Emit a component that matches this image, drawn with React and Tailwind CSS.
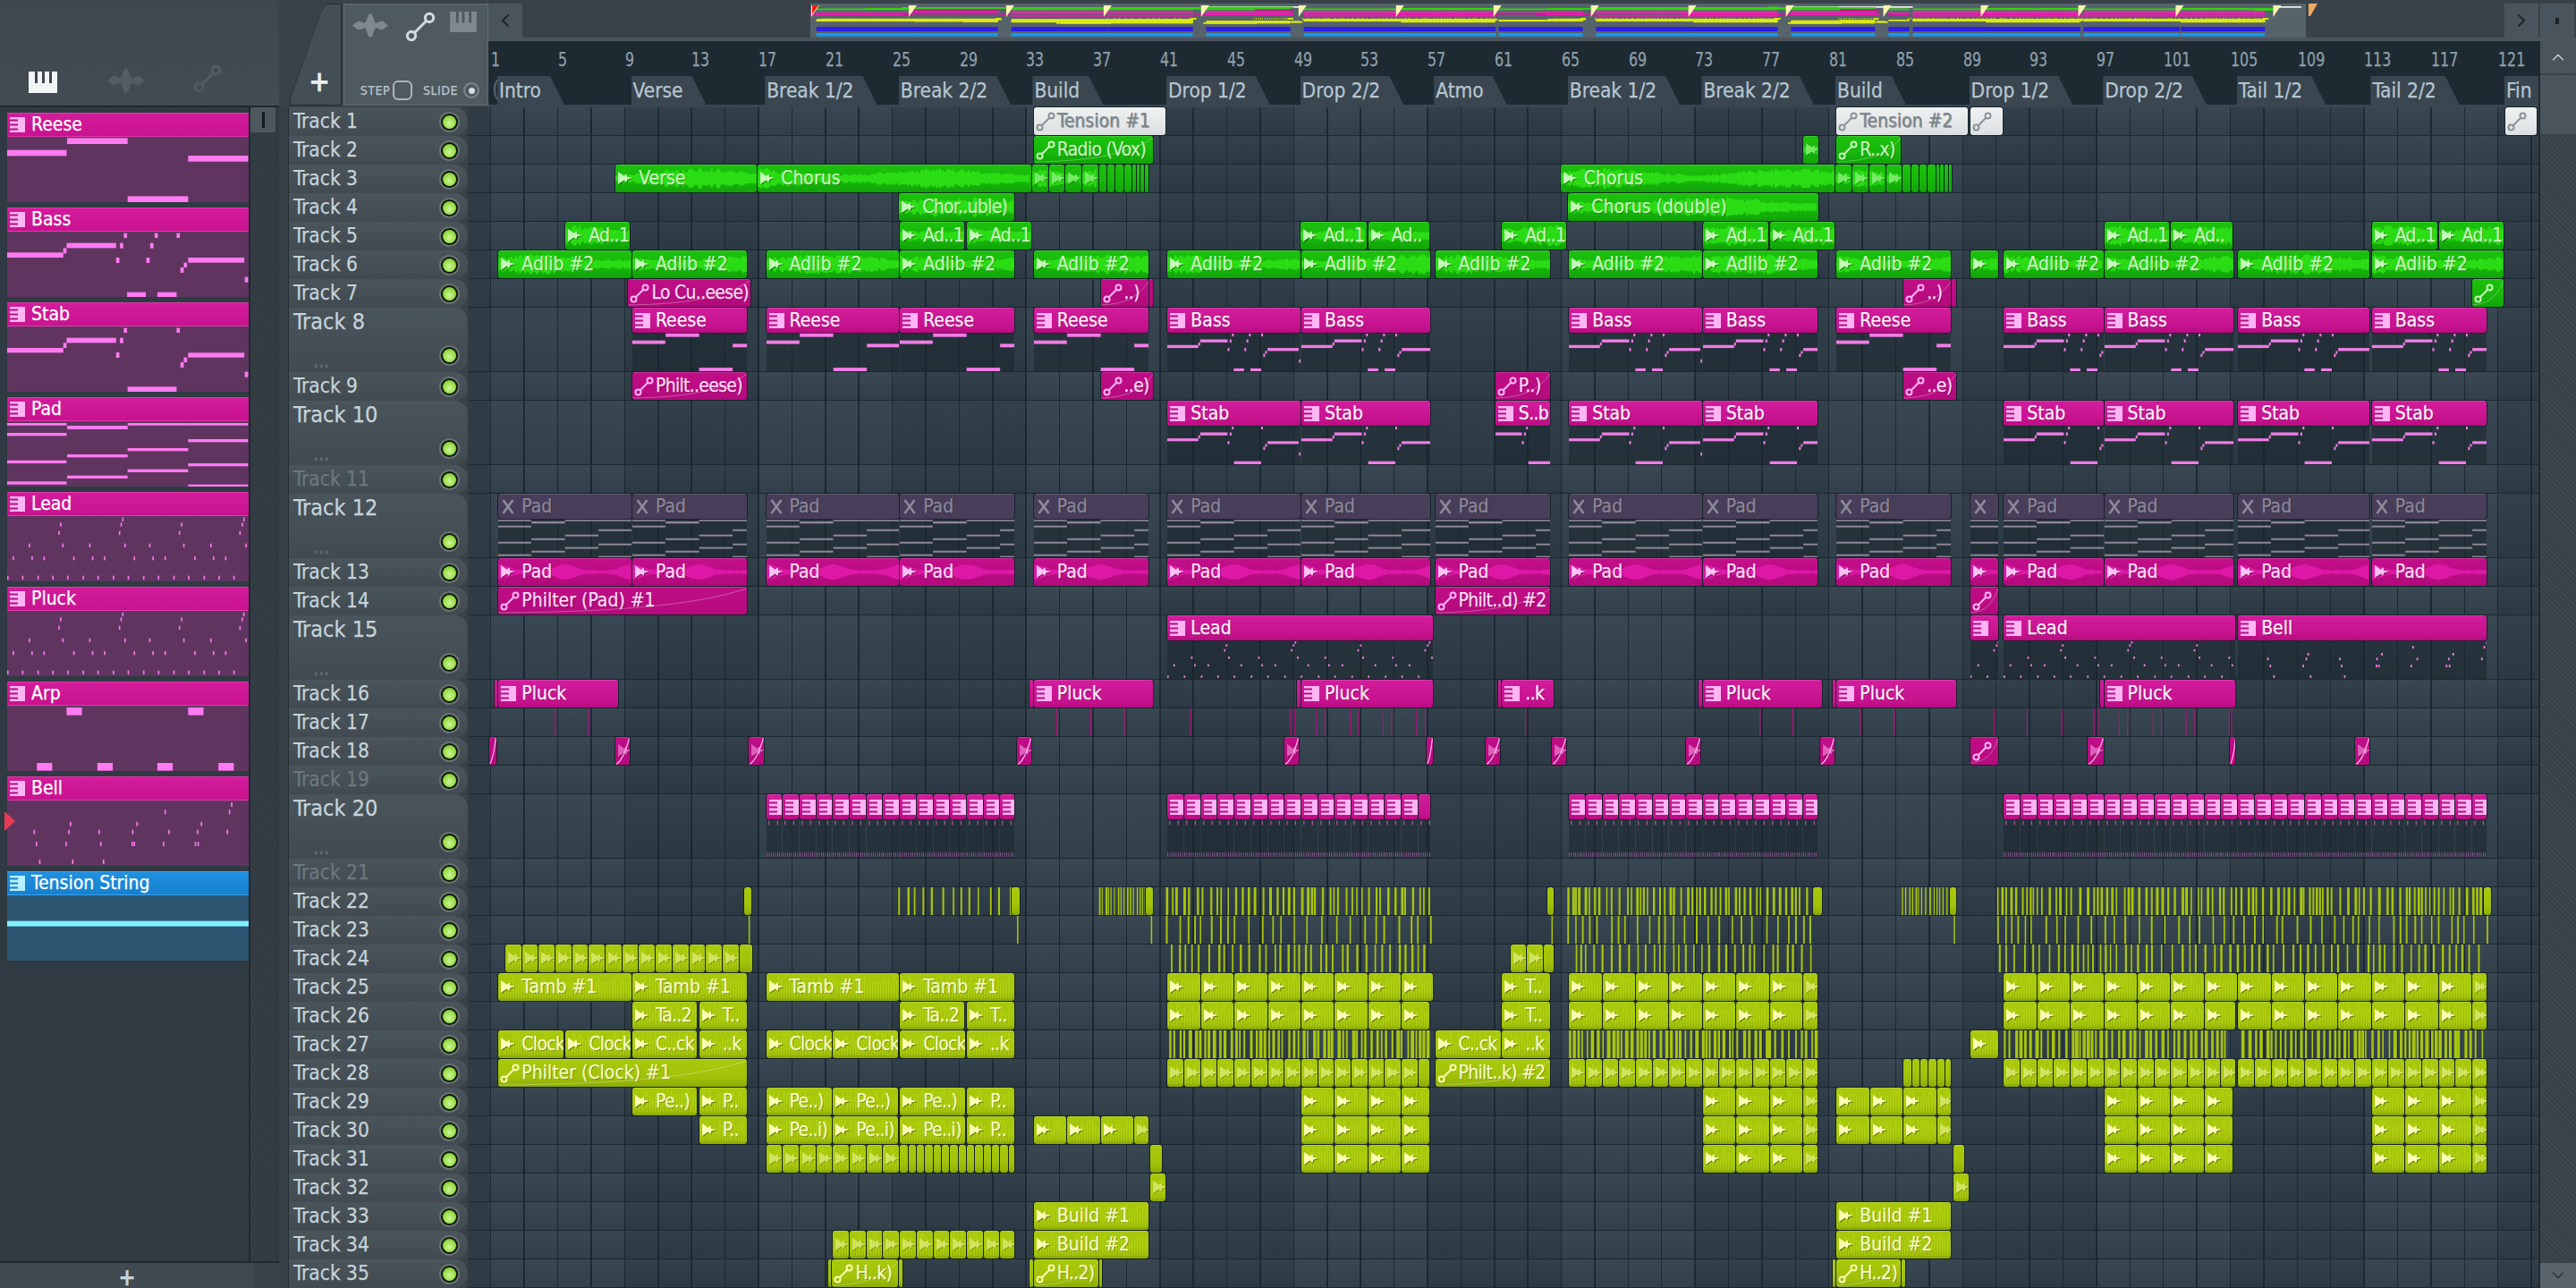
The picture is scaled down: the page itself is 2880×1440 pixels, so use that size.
import React from 'react';
import { ChevronLeft, ChevronRight, ChevronUp, ChevronDown } from 'lucide-react';

const PB = 18.7;
const bx = (b) => 2 + (b - 1) * PB;
const rnd = (s) => { const v = Math.sin(s * 12.9898 + 4.1) * 43758.5453; return v - Math.floor(v); };
const z1 = (z) => z / 1.6333 - 546;
const z2 = (z) => z / 1.6333 + 414;
const z3 = (z) => z / 1.6333 + 1374;

const pc = (s, e, pitch, col, icon = 'a') => {
  const out = [];
  let b = s;
  while (b < e - 0.02) {
    const n = Math.min(b + pitch, e);
    const w = n - b;
    out.push({ s: b, e: n, t: '', i: w >= 0.8 ? icon : '', c: col, f: w < 1.5 });
    b = n;
  }
  return out;
};
const c = (s, e, t, i, col, extra = {}) => ({ s, e, t, i, c: col, ...extra });
const tail = (s, col) => [...pc(s, s + 4, 1, col), ...pc(s + 4, s + 6, 0.5, col, ''), ...pc(s + 6, s + 7, 0.25, col, '')];
const plk = (s, e, t) => [c(s, s + 0.25, '', '', 'p'), c(s + 0.25, e, t, 'n', 'p')];
const ends = (s, e, t, col) => [c(s, s + 0.25, '', '', col), c(e - 0.25, e, '', '', col), c(s + 0.25, e - 0.25, t, 'z', col)];

const SEG = [[1.5, 9.5], [9.5, 16.4], [17.5, 25.5], [25.5, 32.4], [33.5, 40.4], [41.5, 49.5], [49.5, 57.25], [57.5, 64.4], [65.5, 73.5], [73.5, 80.4], [81.5, 88.4], [89.5, 91.2], [91.5, 97.5], [97.5, 105.25], [105.5, 113.4], [113.5, 120.4]];
const segT = (t, col, i, p) => SEG.map(([s, e]) => c(s, e, e - s < 2 ? '' : t, i, col, p ? { p } : {}));
const REESE = [[9.5, 16.4], [17.5, 25.5], [25.5, 32.4], [33.5, 40.4]];
const BASS = [[41.5, 49.5], [49.5, 57.25], [65.5, 73.5], [73.5, 80.4], [91.5, 97.5], [97.5, 105.25], [105.5, 113.4], [113.5, 120.4]];

const CLIPS = {
  1: [c(33.5, 41.4, 'Tension #1', 'z', 'w'), c(81.5, 89.4, 'Tension #2', 'z', 'w'), c(89.5, 91.5, '', 'z', 'w'), c(121.5, 123.4, '', 'z', 'w')],
  2: [c(33.5, 40.65, 'Radio (Vox)', 'z', 'g'), c(79.5, 80.45, '', 'a', 'g', { f: true }), c(81.5, 85.4, 'R..x)', 'z', 'g')],
  3: [c(8.5, 17, 'Verse', 'a', 'g'), c(17, 33.4, 'Chorus', 'a', 'g'), ...tail(33.4, 'g'), c(65, 81.45, 'Chorus', 'a', 'g'), ...tail(81.45, 'g')],
  4: [c(25.45, 32.4, 'Chor..uble)', 'a', 'g'), c(65.45, 80.45, 'Chorus (double)', 'a', 'g')],
  5: [[5.5, 9.4, 'Ad..1'], [25.5, 29.4, 'Ad..1'], [29.5, 33.4, 'Ad..1'], [49.45, 53.45, 'Ad..1'], [53.5, 57.2, 'Ad..'], [61.5, 65.4, 'Ad..1'], [73.5, 77.45, 'Ad..1'], [77.5, 81.4, 'Ad..1'], [97.5, 101.4, 'Ad..1'], [101.5, 105.2, 'Ad..'], [113.5, 117.45, 'Ad..1'], [117.5, 121.4, 'Ad..1']].map(([s, e, t]) => c(s, e, t, 'a', 'g')),
  6: [...SEG.slice(0, 15).map(([s, e]) => c(s, e, e - s < 2 ? '' : 'Adlib #2', 'a', 'g')), c(113.5, 121.4, 'Adlib #2', 'a', 'g')],
  7: [c(9.26, 16.6, 'Lo Cu..eese)', 'z', 'pa'), c(37.5, 40.4, '..)', 'z', 'pa'), c(40.4, 40.65, '', '', 'pa'), c(85.5, 88.4, '..)', 'z', 'pa'), c(88.4, 88.7, '', '', 'pa'), c(119.5, 121.4, '', 'z', 'g')],
  8: [...REESE.map(([s, e]) => c(s, e, 'Reese', 'n', 'p', { p: 'reese' })), ...BASS.slice(0, 4).map(([s, e]) => c(s, e, 'Bass', 'n', 'p', { p: 'bass' })), c(81.5, 88.4, 'Reese', 'n', 'p', { p: 'reese' }), ...BASS.slice(4).map(([s, e]) => c(s, e, 'Bass', 'n', 'p', { p: 'bass' }))],
  9: [c(9.5, 16.4, 'Philt..eese)', 'z', 'pa'), c(37.5, 40.65, '..e)', 'z', 'pa'), c(61.1, 64.4, 'P..)', 'z', 'pa'), c(85.5, 88.7, '..e)', 'z', 'pa')],
  10: [...BASS.slice(0, 2).map(([s, e]) => c(s, e, 'Stab', 'n', 'p', { p: 'stab' })), c(61.1, 64.4, 'S..b', 'n', 'p', { p: 'stab', po: 2 }), ...BASS.slice(2).map(([s, e]) => c(s, e, 'Stab', 'n', 'p', { p: 'stab' }))],
  11: [],
  12: segT('Pad', 'm', 'x', 'pad'),
  13: segT('Pad', 'pw', 'a'),
  14: [c(1.5, 16.4, 'Philter (Pad) #1', 'z', 'pa'), c(57.5, 64.4, 'Philt..d) #2', 'z', 'pa'), c(89.5, 91.2, '', 'z', 'pa')],
  15: [c(41.5, 57.4, 'Lead', 'n', 'p', { p: 'lead' }), c(89.5, 91.2, '', 'n', 'p', { p: 'lead', po: 14 }), c(91.5, 105.4, 'Lead', 'n', 'p', { p: 'lead' }), c(105.5, 120.4, 'Bell', 'n', 'p', { p: 'bell' })],
  16: [...plk(1.25, 8.7, 'Pluck'), ...plk(33.25, 40.65, 'Pluck'), ...plk(49.25, 57.4, 'Pluck'), ...plk(61.25, 64.65, '..k'), ...plk(73.25, 80.65, 'Pluck'), ...plk(81.25, 88.7, 'Pluck'), ...plk(97.25, 105.4, 'Pluck')],
  17: [],
  18: [...[[0.95, 1.4], [8.5, 9.4], [16.45, 17.4], [32.5, 33.4], [48.5, 49.4], [57, 57.4], [60.5, 61.4], [64.5, 65.4], [72.5, 73.4], [80.5, 81.4], [96.5, 97.5], [105, 105.4], [112.5, 113.4]].map(([s, e]) => c(s, e, '', e - s > 0.7 ? 'a' : '', 'pa', { f: true, sl: true })), c(89.5, 91.2, '', 'z', 'pa')],
  19: [],
  20: [...pc(17.5, 32.4, 1, 'p', 'n'), ...pc(41.5, 57.25, 1, 'p', 'n'), ...pc(65.5, 80.4, 1, 'p', 'n'), ...pc(91.5, 120.4, 1, 'p', 'n')].map((k) => ({ ...k, p: 'ticks', f: false })),
  21: [],
  22: [c(16.2, 16.65, '', '', 'y'), c(32.2, 32.7, '', '', 'y'), c(40.2, 40.65, '', '', 'y'), c(64.2, 64.65, '', '', 'y'), c(80.1, 80.65, '', '', 'y'), c(88.25, 88.7, '', '', 'y'), c(120.2, 120.7, '', '', 'y')],
  23: [],
  24: [...pc(1.9, 16.7, 1, 'y'), ...pc(62, 64.65, 1, 'y')],
  25: [c(1.5, 9.5, 'Tamb #1', 'a', 'y'), c(9.5, 16.4, 'Tamb #1', 'a', 'y'), c(17.5, 25.5, 'Tamb #1', 'a', 'y'), c(25.5, 32.4, 'Tamb #1', 'a', 'y'), ...pc(41.5, 57.4, 2, 'y'), c(61.5, 64.4, 'T..', 'a', 'y'), ...pc(65.5, 80.4, 2, 'y'), ...pc(91.5, 120.4, 2, 'y')],
  26: [c(9.5, 13.4, 'Ta..2', 'a', 'y'), c(13.5, 16.4, 'T..', 'a', 'y'), c(25.5, 29.4, 'Ta..2', 'a', 'y'), c(29.5, 32.4, 'T..', 'a', 'y'), ...pc(41.5, 57.2, 2, 'y'), c(61.5, 64.4, 'T..', 'a', 'y'), ...pc(65.5, 80.4, 2, 'y'), ...pc(91.5, 105.4, 2, 'y'), ...pc(105.5, 120.4, 2, 'y')],
  27: [c(1.5, 5.45, 'Clock', 'a', 'y'), c(5.5, 9.45, 'Clock', 'a', 'y'), c(9.5, 13.4, 'C..ck', 'a', 'y'), c(13.5, 16.4, '..k', 'a', 'y'), c(17.5, 21.45, 'Clock', 'a', 'y'), c(21.5, 25.45, 'Clock', 'a', 'y'), c(25.5, 29.45, 'Clock', 'a', 'y'), c(29.5, 32.4, '..k', 'a', 'y'), c(57.5, 61.45, 'C..ck', 'a', 'y'), c(61.5, 64.4, '..k', 'a', 'y'), c(89.5, 91.2, '', 'a', 'y')],
  28: [c(1.5, 16.4, 'Philter (Clock) #1', 'z', 'y'), ...pc(41.5, 57.2, 1, 'y'), c(57.5, 64.4, 'Philt..k) #2', 'z', 'y'), ...pc(65.5, 80.4, 1, 'y'), ...pc(85.5, 88.4, 0.5, 'y', ''), ...pc(91.5, 105.4, 1, 'y'), ...pc(105.5, 120.4, 1, 'y')],
  29: [c(9.5, 13.4, 'Pe..)', 'a', 'y'), c(13.5, 16.4, 'P..', 'a', 'y'), c(17.5, 21.45, 'Pe..)', 'a', 'y'), c(21.5, 25.45, 'Pe..)', 'a', 'y'), c(25.5, 29.45, 'Pe..)', 'a', 'y'), c(29.5, 32.4, 'P..', 'a', 'y'), ...pc(49.5, 57.2, 2, 'y'), ...pc(73.5, 80.4, 2, 'y'), ...pc(81.5, 88.4, 2, 'y'), ...pc(97.5, 105.2, 2, 'y'), ...pc(113.5, 120.4, 2, 'y')],
  30: [c(13.5, 16.4, 'P..', 'a', 'y'), c(17.5, 21.45, 'Pe..i)', 'a', 'y'), c(21.5, 25.45, 'Pe..i)', 'a', 'y'), c(25.5, 29.45, 'Pe..i)', 'a', 'y'), c(29.5, 32.4, 'P..', 'a', 'y'), ...pc(33.5, 40.4, 2, 'y'), ...pc(49.5, 57.2, 2, 'y'), ...pc(73.5, 80.4, 2, 'y'), ...pc(81.5, 88.4, 2, 'y'), ...pc(97.5, 105.2, 2, 'y'), ...pc(113.5, 120.4, 2, 'y')],
  31: [...pc(17.5, 25.5, 1, 'y'), ...pc(25.5, 32.4, 0.5, 'y', ''), c(40.45, 41.2, '', '', 'y'), ...pc(49.5, 57.2, 2, 'y'), ...pc(73.5, 80.4, 2, 'y'), c(88.5, 89.2, '', '', 'y'), ...pc(97.5, 105.2, 2, 'y'), ...pc(113.5, 120.4, 2, 'y')],
  32: [c(40.45, 41.4, '', 'a', 'y', { f: true }), c(88.5, 89.45, '', 'a', 'y', { f: true })],
  33: [c(33.5, 40.4, 'Build #1', 'a', 'y'), c(81.5, 88.4, 'Build #1', 'a', 'y')],
  34: [...pc(21.5, 32.4, 1, 'y'), c(33.5, 40.4, 'Build #2', 'a', 'y'), c(81.5, 88.4, 'Build #2', 'a', 'y')],
  35: [...ends(21.2, 25.7, 'H..k)', 'y'), ...ends(33.25, 37.65, 'H..2)', 'y'), ...ends(81.25, 85.65, 'H..2)', 'y')],
};

const genLines = (s, e, seed, pMin, pMax, wMin, wMax) => {
  const out = [];
  let x = bx(s), i = 0;
  const end = bx(e);
  while (x < end) {
    const r = rnd(seed + i * 1.7), r2 = rnd(seed + i * 3.3 + 9);
    out.push({ x, w: wMin + r * (wMax - wMin) });
    x += pMin + r2 * (pMax - pMin);
    i++;
  }
  return out;
};
const LINES = {
  17: { col: '#b0127c', items: [z1(1013), z1(1073), z2(361), z2(423), z2(484), z2(605), z2(788), z2(795), z2(835), z2(851), z2(897), z2(912), z2(957), z2(972), z2(1018), z2(1034), z2(1217), z3(77), z3(137), z3(260), z3(322), z3(505), z3(565), z3(628), z3(687), z3(694), z3(733), z3(748), z3(795), z3(810), z3(855), z3(871), z3(934), z3(938)].map((x) => ({ x, w: 1.2 })) },
  22: { col: '#a9c60b', items: [...genLines(25.4, 32.2, 1, 7, 18, 1.5, 2.5), ...genLines(37.4, 40.2, 2, 2.5, 4.5, 1, 2), ...genLines(41.4, 57.3, 3, 3, 10, 1.5, 3), ...genLines(65.4, 80.1, 4, 3, 10, 1.5, 3), ...genLines(85.4, 88.25, 5, 2.5, 5, 1, 2), ...genLines(91.1, 120.2, 6, 3, 10, 1.5, 3)] },
  23: { col: '#a9c60b', items: [...[16.45, 32.5, 40.5, 64.45, 88.5].map((b) => ({ x: bx(b), w: 1.5 })), ...genLines(41.4, 57.2, 7, 6, 17, 1.5, 2), ...genLines(65.4, 80.5, 8, 6, 17, 1.5, 2), ...genLines(91.1, 120.5, 9, 6, 17, 1.5, 2)] },
  24: { col: '#a9c60b', items: [...genLines(41.7, 57.3, 10, 5, 12, 1.5, 2.5), ...genLines(65.9, 80.2, 11, 5, 12, 1.5, 2.5), ...genLines(91.2, 120.1, 12, 5, 12, 1.5, 2.5)] },
  27: { col: '#a9c60b', items: [...genLines(41.6, 57.2, 13, 3.5, 8, 1.5, 4), ...genLines(65.5, 80.4, 14, 3.5, 8, 1.5, 4), ...genLines(91.5, 105, 15, 3.5, 8, 1.5, 4), ...genLines(105.7, 120.4, 16, 3.5, 8, 1.5, 4)] },
};

const dotRows = [[5, [223, 443]], [22, [110, 220, 330, 440]], [50, [107, 217, 326, 436]], [92, [53, 114, 163, 227, 272, 334, 383, 447]], [135, [24, 58, 80, 134, 168, 190, 244, 278, 300, 354, 388, 410]], [200, [14, 41, 69, 96, 123, 151, 178, 206, 233, 261, 288, 316, 343, 371, 398, 425]]];
const leadN = dotRows.flatMap(([y, xs]) => xs.map((x) => [x, y, 2.6, 13]));
const bellN = [[421, 6], [300, 31], [417, 31], [128, 71], [249, 71], [366, 71], [62, 98], [125, 98], [180, 98], [241, 98], [307, 98], [359, 98], [413, 98], [66, 138], [120, 138], [183, 138], [240, 138], [244, 138], [297, 138], [355, 138], [360, 138], [72, 198], [132, 198], [188, 198]].map(([x, y]) => [x, y, 2.6, 15]);
const NOTES = {
  reese: { bars: 8, n: [[14, 44, 108, 20], [123, 4, 110, 20], [343, 63, 109, 20], [233, 199, 110, 20]] },
  bass: { bars: 8, n: [[14, 70, 102, 17], [122, 38, 90, 17], [116, 55, 6, 18], [343, 87, 102, 17], [335, 104, 6, 16], [329, 120, 6, 18], [226, 5, 6, 16], [282, 5, 6, 16], [322, 5, 6, 16], [219, 38, 6, 18], [274, 38, 6, 18], [212, 87, 6, 18], [267, 87, 6, 18], [232, 203, 34, 16], [287, 203, 35, 16], [446, 152, 6, 18]] },
  stab: { bars: 8, n: [[14, 72, 102, 16], [122, 38, 90, 17], [116, 55, 6, 17], [343, 88, 102, 16], [335, 104, 6, 16], [329, 120, 6, 18], [226, 5, 6, 16], [322, 5, 6, 16], [219, 38, 6, 18], [212, 87, 6, 18], [233, 202, 89, 17], [446, 152, 6, 18]] },
  pad: { bars: 8, n: [[14, 39, 108, 10], [14, 131, 108, 10], [14, 202, 108, 10], [123, 15, 110, 12], [123, 111, 110, 10], [123, 182, 110, 10], [233, 6, 110, 8], [233, 90, 110, 10], [233, 161, 110, 10], [343, 60, 109, 10], [343, 141, 109, 10], [343, 212, 109, 7], [14, 6, 108, 8], [343, 6, 109, 8]] },
  lead: { bars: 16, n: leadN },
  bell: { bars: 16, n: bellN },
  arp: { bars: 8, n: [[122, 6, 28, 26], [343, 6, 28, 26], [68, 192, 28, 26], [178, 192, 28, 26], [287, 192, 28, 26], [398, 192, 28, 26]] },
  tension: { bars: 8, n: [[14, 86, 439, 18]] },
  ticks: { bars: 1, n: [[70, 8, 22, 24, 0.8], [290, 8, 22, 24, 0.8], ...[0, 1, 2, 3, 4, 5, 6, 7].map((i) => [20 + i * 55, 188, 14, 26, 0.75])] },
};

const PAN = [
  { t: 'Reese', p: 'reese' }, { t: 'Bass', p: 'bass' }, { t: 'Stab', p: 'stab' }, { t: 'Pad', p: 'pad' },
  { t: 'Lead', p: 'lead' }, { t: 'Pluck', p: 'lead' }, { t: 'Arp', p: 'arp' }, { t: 'Bell', p: 'bell' },
];

const TALL = [8, 10, 12, 15, 20];
const DIM = [11, 19, 21];
const TRACKS = Array.from({ length: 35 }, (_, i) => i + 1);
const SECTIONS = [[1, 'Intro'], [9, 'Verse'], [17, 'Break 1/2'], [25, 'Break 2/2'], [33, 'Build'], [41, 'Drop 1/2'], [49, 'Drop 2/2'], [57, 'Atmo'], [65, 'Break 1/2'], [73, 'Break 2/2'], [81, 'Build'], [89, 'Drop 1/2'], [97, 'Drop 2/2'], [105, 'Tail 1/2'], [113, 'Tail 2/2'], [121, 'Fin']];
const NUMS = Array.from({ length: 31 }, (_, i) => 1 + i * 4);
const WAVE_D = 'M0 14C3 12 5 9 8 9C11 9 13 12 15 11C17 8 18 0 21 0C24 0 25 8 27 11C29 12 31 9 34 9C37 9 39 12 42 14C39 16 37 19 34 19C31 19 29 16 27 17C25 20 24 28 21 28C18 28 17 20 15 17C13 16 11 19 8 19C5 19 3 16 0 14Z';
const ICON_D = 'M0 0 7 5 10 2.5 11 6 17 7.5 11 9 10 12.5 7 10 0 15Z';

const AudioIcon = () => (
  <svg viewBox="0 0 18 16" className="w-[17px] h-[15px] shrink-0">
    <path d={ICON_D} fill="rgba(0,0,0,.4)" transform="translate(1 1)" />
    <path d={ICON_D} fill="currentColor" />
  </svg>
);
const AutoIcon = ({ s = 22 }) => (
  <svg viewBox="0 0 22 22" width={s} height={s} className="shrink-0" fill="none" stroke="currentColor" strokeWidth="2">
    <circle cx="4.5" cy="17.5" r="3" />
    <circle cx="17.5" cy="4.5" r="3" />
    <path d="M6.8 15.2 15.2 6.8" />
  </svg>
);
const PatIcon = ({ dark }) => (
  <svg viewBox="0 0 17 17" className="w-[17px] h-[17px] shrink-0">
    <rect width="17" height="17" fill="currentColor" />
    <path d="M0 2.5h9v2H0ZM0 7.5h9v2H0ZM0 12.5h9v2H0Z" fill={dark} />
  </svg>
);
const XIcon = () => (
  <svg viewBox="0 0 14 17" className="w-[14px] h-[17px] shrink-0" fill="none" stroke="currentColor" strokeWidth="2.6">
    <path d="M1.5 1C5 6 9 11 12.5 16M12.5 1C9 6 5 11 1.5 16" />
  </svg>
);

const STY = {
  g: { box: 'bg-[linear-gradient(180deg,#1cc20c,#16b40b_65%,#10a308)]', text: 'text-[#c6f7bc]', wave: 'rgba(50,232,24,.75)', icon: 'text-[#c4f9b8]' },
  p: { box: 'bg-[linear-gradient(180deg,#d21d9c,#c7128f_75%,#b70c80)]', text: 'text-[#fff0fb]', wave: '', icon: 'text-[#ffb4f4]', dark: '#b30f82' },
  pa: { box: 'bg-[linear-gradient(180deg,#c00e86,#b40a7d)]', text: 'text-[#ffdcf4]', wave: '', icon: 'text-[#ffb4f4]' },
  pw: { box: 'bg-[linear-gradient(180deg,#c40f8b,#b10a7c)]', text: 'text-[#ffdcf4]', wave: '#dd18a6', icon: 'text-[#ffc2f5]' },
  y: { box: 'bg-[linear-gradient(180deg,#a9c90c,#a2c20a_65%,#8dab05)]', text: 'text-[#f6f9c4]', wave: 'rgba(190,220,26,.55)', icon: 'text-[#fbfdb4]' },
  w: { box: 'bg-[linear-gradient(180deg,#f0f2f2,#dcdfe0)]', text: 'text-[#7b868c]', wave: '', icon: 'text-[#8a9499]' },
  m: { box: 'bg-[#483e59]', text: 'text-[#8c8699]', wave: '', icon: 'text-[#8c8a99]' },
};

function wavePath(w, h, seed, c0) {
  let top = `M0 ${h / 2}`, bot = '';
  for (let x = 0; x <= w; x += 2) {
    const r = rnd(seed + x * 0.77);
    let a;
    if (c0 === 'pw') {
      const ph = Math.abs(Math.cos((x / (8 * PB)) * Math.PI * 2));
      a = (h / 2) * (0.1 + 0.42 * Math.pow(ph, 5) + 0.06 * r);
    } else {
      a = (h / 2) * (0.38 + 0.4 * r) * (0.72 + 0.28 * Math.sin(x * 0.03 + seed));
    }
    top += `L${x} ${(h / 2 - a).toFixed(1)}`;
    bot = `L${x} ${(h / 2 + a).toFixed(1)}` + bot;
  }
  return top + bot + 'Z';
}
function stripePath(w, h, seed) {
  let d = '';
  for (let x = 1; x < w; x += 3) {
    const r = rnd(seed + x * 1.31);
    d += `M${x} ${(h * (0.08 + 0.3 * r)).toFixed(1)}h1.4V${(h * 0.9).toFixed(1)}h-1.4Z`;
  }
  return d;
}

const NoteSvg = ({ name, col, style }) => (
  <svg viewBox="14 0 439 219" preserveAspectRatio="none" className="absolute top-0 left-0 h-full" style={style}>
    {NOTES[name].n.map((r, i) => <rect key={i} x={r[0]} y={r[1]} width={r[2]} height={r[3]} fill={col} opacity={r[4] || 1} />)}
  </svg>
);

function Clip({ k, h, idx }) {
  const st = STY[k.c];
  const x = bx(k.s), w = (k.e - k.s) * PB - 0.9;
  const tall = h > 32;
  const hh = tall ? 28 : 31;
  const seed = idx * 7.3 + k.s;
  const isAudio = k.i === 'a' && st.wave;
  const iconBox = k.f ? 'opacity-50' : '';
  const tight = k.t && (k.t.includes('..') || k.t === 'Clock' || k.t === 'Radio (Vox)');
  return (
    <div className="absolute top-0 bottom-0" style={{ left: x, width: w }}>
      <div className={`relative overflow-hidden rounded-[3px] shadow-[0_0_0_1px_#17232b] ${tall ? 'h-[28px]' : 'h-[31px]'} ${st.box}`}>
        {isAudio && w > 5 && (
          <svg className="absolute inset-0 w-full h-full" viewBox={`0 0 ${w} ${hh}`} preserveAspectRatio="none">
            <path d={k.c === 'y' ? stripePath(w, hh, seed) : wavePath(w, hh, seed, k.c)} fill={st.wave} />
          </svg>
        )}
        {k.i === 'z' && (
          <svg className="absolute inset-0 w-full h-full" viewBox="0 0 100 31" preserveAspectRatio="none">
            <path d="M0 29C50 28 80 20 100 2" fill="none" stroke="rgba(255,255,255,.3)" strokeWidth="1" vectorEffect="non-scaling-stroke" />
          </svg>
        )}
        {k.sl && (
          <svg className="absolute inset-0 w-full h-full" viewBox="0 0 100 31" preserveAspectRatio="none">
            <path d="M0 31C40 28 75 15 100 0" fill="none" stroke="#f6a8e6" strokeWidth="1.4" vectorEffect="non-scaling-stroke" />
          </svg>
        )}
        <div className="absolute inset-x-0 top-0 h-px bg-white/15" />
        <div className={`relative flex items-center h-full whitespace-nowrap text-[21px] leading-none [text-shadow:1px_1px_0_rgba(0,0,0,.28)] ${st.text} ${tight ? 'tracking-[-.7px]' : ''}`}>
          {k.i === 'a' && <span className={`ml-[3px] ${st.icon} ${iconBox}`}><AudioIcon /></span>}
          {k.i === 'z' && <span className={`ml-[2px] ${st.icon} ${iconBox}`}><AutoIcon /></span>}
          {k.i === 'n' && <span className={`ml-[3px] ${st.icon}`}><PatIcon dark={st.dark} /></span>}
          {k.i === 'x' && <span className={`ml-[4px] ${st.icon}`}><XIcon /></span>}
          {k.t && <span className={k.i === 'z' ? 'ml-[2px]' : k.i === 'x' ? 'ml-[8px]' : 'ml-[6px]'}>{k.t}</span>}
        </div>
      </div>
      {tall && k.p && (
        <div className="relative h-[43px] overflow-hidden bg-[#1c262d]/55">
          <NoteSvg name={k.p} col={k.c === 'm' ? '#8f8899' : '#f07ce6'} style={{ width: NOTES[k.p].bars * PB, left: -(k.po || 0) * PB }} />
        </div>
      )}
    </div>
  );
}

function Lane({ t }) {
  const tall = TALL.includes(t);
  const clips = CLIPS[t] || [];
  const lines = LINES[t];
  const h = tall ? 72 : 32;
  return (
    <div className={`relative border-b border-[#1b2831] bg-[linear-gradient(180deg,rgba(255,255,255,.025),rgba(0,0,0,.05))] ${tall ? 'h-[72px]' : 'h-[32px]'}`}>
      {lines && (
        <svg className="absolute inset-0 w-full h-[31px]">
          {lines.items.map((l, i) => <rect key={i} x={l.x} y={0} width={l.w} height={31} fill={lines.col} />)}
        </svg>
      )}
      {clips.map((k, i) => <Clip key={i} k={k} h={h} idx={t * 40 + i} />)}
    </div>
  );
}

const Led = () => (
  <div className="w-[23px] h-[23px] shrink-0 rounded-full bg-[#68746f] p-[2px]">
    <div className="w-full h-full rounded-full bg-[#10170d] p-[2px]">
      <div className="w-full h-full rounded-full bg-[radial-gradient(circle_at_50%_60%,#cdf59a,#98dd48_55%,#66a824)]" />
    </div>
  </div>
);

function TrackHead({ t }) {
  const tall = TALL.includes(t);
  const dim = DIM.includes(t);
  return (
    <div className={`flex ${tall ? 'h-[72px]' : 'h-[32px]'}`}>
      <div className="w-[11px] bg-[#363f46] border-r border-[#252e35]" />
      <div className={`w-[200px] rounded-r-[15px] bg-[linear-gradient(180deg,#4a545b,#414a51)] pl-[5px] pr-[9px] ${tall ? 'flex flex-col justify-between pb-[7px]' : 'flex items-center justify-between'}`}>
        <span className={`whitespace-nowrap ${tall ? 'text-[25px] leading-[32px]' : 'text-[22.5px] leading-[30px] pb-[2px]'} ${dim ? 'text-[#6c787c]' : 'text-[#c6d3d9]'}`}>Track {t}</span>
        {tall ? (
          <div className="flex items-end justify-between">
            <span className="ml-[22px] mb-[-3px] text-[18px] leading-[14px] font-bold text-[#5d676d]">...</span>
            <Led />
          </div>
        ) : <Led />}
      </div>
      <div className="flex-1 border-b border-[#1b2831] bg-[#2f3c46]" />
    </div>
  );
}

function OverviewSvg() {
  const yFor = (t) => {
    const i = t - 1;
    if (i < 7) return 3 + i * 0.5;
    if (i < 21) return 8 + (i - 7) * 0.4;
    return 16 + (i - 21) * 0.38;
  };
  const col = { g: '#2ed50e', p: '#ee1ab0', pa: '#d811a0', pw: '#ee1ab0', y: '#dcea10', w: '#e6e8e8', m: '#8a7f99' };
  const S = 13.62;
  const rects = [];
  TRACKS.forEach((t) => {
    (CLIPS[t] || []).forEach((k, i) => {
      rects.push(<rect key={`${t}-${i}`} x={(k.s - 1) * S} y={yFor(t)} width={(k.e - k.s) * S} height={1.8} fill={col[k.c]} />);
    });
    if (LINES[t] && LINES[t].col !== '#b0127c') {
      LINES[t].items.forEach((l, i) => {
        rects.push(<rect key={`l${t}-${i}`} x={((l.x - 2) / PB) * S} y={yFor(t)} width={0.8} height={1.8} fill="#dcea10" />);
      });
    }
  });
  return (
    <svg viewBox="0 0 1672 38" className="absolute inset-0 w-[1672px] h-[38px] overflow-visible">
      {rects}
      {SEG.map(([s, e], i) => (
        <g key={i}>
          <rect x={(s - 1) * S} y={26} width={(e - s) * S} height={5} fill="#2a1ee8" />
          <rect x={(s - 1) * S} y={33} width={(e - s) * S} height={3.5} fill="#0f9cf5" />
        </g>
      ))}
      {SECTIONS.map(([b], i) => <path key={i} d={`M${(b - 1) * S + 1} 2h9l-9 13Z`} fill="#fdf3b0" />)}
      <path d="M2 2h7l-7 10Z" fill="#f01818" />
      <path d="M1675 0h10l-8 14-2 0Z" fill="#f0a860" />
    </svg>
  );
}

function Panel({ t, p }) {
  return (
    <div className="shrink-0">
      <div className="flex items-center h-[27px] rounded-[1px] border-y border-[#e03aab] bg-[linear-gradient(180deg,#d31c9b,#c9128f)] text-white text-[21px] leading-none">
        <span className="ml-[3px] text-[#ffb4f4]"><PatIcon dark="#b30f82" /></span>
        <span className="ml-[7px]">{t}</span>
      </div>
      <div className="relative h-[73px] overflow-hidden bg-[#5f3560]">
        <NoteSvg name={p} col="#ff7af1" style={{ width: 270 }} />
      </div>
    </div>
  );
}

export default function App() {
  return (
    <div className="flex w-[2880px] h-[1440px] overflow-hidden bg-[#3a4249] text-[#c6d3d9] [font-family:'DejaVu_Sans','Liberation_Sans',sans-serif] [font-stretch:75%] [-webkit-text-stroke:0.25px] antialiased">
      {/* picker */}
      <aside className="relative flex flex-col w-[312px] shrink-0">
        <div className="h-[118px] flex items-end gap-[60px] pl-[32px] pb-[14px] bg-[linear-gradient(180deg,#3f474e,#434c53)]">
          <svg viewBox="0 0 32 24" className="w-[32px] h-[24px] shrink-0">
            <path d="M0 0h32v24H0Z" fill="#f2f5f6" />
            <path d="M7 0h3v13H7ZM15 0h3v13h-3ZM23 0h3v13h-3Z" fill="#3f474e" />
          </svg>
          <svg viewBox="0 0 42 28" className="w-[42px] h-[28px] shrink-0 ml-[-4px]" fill="#535d64">
            <path d={WAVE_D} />
          </svg>
          <span className="ml-[-6px] text-[#515b62]"><AutoIcon s={32} /></span>
        </div>
        <div className="relative flex flex-1 min-h-0 border-y-2 border-[#20292f] bg-[#2f3a42]">
          <div className="flex flex-col gap-[6px] pt-[6px] pl-[8px] w-[278px]">
            {PAN.map((x) => <Panel key={x.t} {...x} />)}
            <div className="shrink-0">
              <div className="flex items-center h-[27px] border-y border-[#3fa3ea] bg-[linear-gradient(180deg,#2090e0,#1680ce)] text-white text-[21px] leading-none">
                <span className="ml-[3px] text-[#b4f0ff]"><PatIcon dark="#1680ce" /></span>
                <span className="ml-[7px]">Tension String</span>
              </div>
              <div className="relative h-[73px] overflow-hidden bg-[#2c5572]">
                <NoteSvg name="tension" col="#7ff0fe" style={{ width: 270 }} />
              </div>
            </div>
          </div>
          <div className="w-[30px] border-l-2 border-[#20292f] bg-[repeating-linear-gradient(45deg,#30393f_0,#30393f_2px,#363f45_2px,#363f45_4px)]">
            <div className="flex items-center justify-center h-[28px] bg-[#4d575e]"><div className="w-[3px] h-[18px] bg-[#141b20]" /></div>
          </div>
          <div className="absolute left-[5px] top-[787px] w-0 h-0 border-y-[11px] border-y-transparent border-l-[12px] border-l-[#e83a55]" />
        </div>
        <div className="h-[28px] w-[284px] flex justify-center bg-[#414a51] text-[#c6d3d9] text-[26px] leading-[32px] font-bold">+</div>
      </aside>

      {/* track names */}
      <div className="flex flex-col w-[234px] shrink-0">
        <div className="relative flex h-[120px] pl-[12px] pt-[4px] gap-[2px] pb-[2px] bg-[#3a4249]">
          <div className="w-[58px] bg-[#202a31] [clip-path:polygon(0_100%,0_93%,62%_6%,72%_0,100%_0,100%_100%)] p-px">
            <div className="flex h-full items-end justify-center pb-[8px] bg-[#444e55] [clip-path:polygon(0_100%,0_93%,62%_6%,72%_0,100%_0,100%_100%)] text-[#e8eef0] text-[32px] leading-[36px] font-bold pl-[8px]">+</div>
          </div>
          <div className="flex-1 flex flex-col justify-between border border-[#626c73] bg-[#4f5960] px-[9px] pt-[8px] pb-[5px]">
            <div className="flex items-start">
              <svg viewBox="0 0 42 28" className="w-[40px] h-[27px] mt-[2px]" fill="#7e898f">
                <path d={WAVE_D} />
              </svg>
              <span className="ml-[19px] text-[#cfdade]"><AutoIcon s={34} /></span>
              <svg viewBox="0 0 31 24" className="w-[30px] h-[23px] ml-[16px]">
                <path d="M0 0h31v24H0Z" fill="#7e898f" />
                <path d="M7 0h3v13H7ZM14 0h3v13h-3ZM22 0h3v13h-3Z" fill="#4f5960" />
              </svg>
            </div>
            <div className="flex items-center justify-end gap-[3px] text-[14px] text-[#b9c6cc] tracking-[.5px]">
              <span>STEP</span>
              <span className="w-[22px] h-[22px] rounded-[6px] border-2 border-[#aab6bb]" />
              <span className="ml-[9px]">SLIDE</span>
              <span className="flex items-center justify-center w-[18px] h-[18px] ml-[3px] rounded-full border-2 border-[#7d878d]"><span className="w-[7px] h-[7px] rounded-full bg-[#d4dde0]" /></span>
            </div>
          </div>
        </div>
        <div className="flex flex-col">
          {TRACKS.map((t) => <TrackHead key={t} t={t} />)}
        </div>
      </div>

      {/* arrangement */}
      <div className="relative flex-1 flex flex-col min-w-0">
        <div className="h-[46px] flex pt-[4px] pb-[4px] pr-[42px] bg-[#3a4249] border-b-[4px] border-[#4b555d]">
          <div className="w-[38px] h-[38px] flex items-center justify-center bg-[#4a545c] text-[#1f272d]"><ChevronLeft size={24} strokeWidth={2} /></div>
          <div className="relative w-[1672px] h-[38px] ml-[322px] bg-[#56636b] overflow-visible"><OverviewSvg /></div>
          <div className="flex-1" />
          <div className="w-[38px] h-[38px] flex items-center justify-center bg-[#4a545c] text-[#1f272d]"><ChevronRight size={24} strokeWidth={2} /></div>
        </div>
        <div className="flex flex-1 min-h-0">
          <div className="flex flex-col w-[2292px] shrink-0">
            <div className="relative h-[74px] overflow-hidden bg-[#1e2a32] border-b-[3px] border-[#3a4650]">
              {NUMS.map((n) => (
                <span key={n} className="absolute top-[7px] text-[22px] leading-[28px] text-[#8fa0ab] origin-left scale-x-[.8]" style={{ left: bx(n) + 1 }}>{n}</span>
              ))}
              {SECTIONS.map(([b, t], i) => (
                <div key={i} className="absolute top-[39px] h-[32px] flex items-center pl-[2px] pr-[26px] bg-[#3a4650] [clip-path:polygon(0_0,calc(100%-16px)_0,100%_100%,0_100%)] text-[22.5px] leading-none text-[#b6c6d0] whitespace-nowrap" style={{ left: bx(b) + 8 }}>{t}</div>
              ))}
              <span className="absolute top-[38px] text-[24px] leading-[32px] text-[#56636b]" style={{ left: 4 }}>(</span>
            </div>
            <div className="flex flex-col bg-[repeating-linear-gradient(90deg,#1a2731_0,#1a2731_1.5px,transparent_1.5px,transparent_37.4px),repeating-linear-gradient(90deg,#34434e_0,#34434e_149.6px,#2e3c47_149.6px,#2e3c47_299.2px)] bg-[position:2px_0]">
              {TRACKS.map((t) => <Lane key={t} t={t} />)}
            </div>
          </div>
          <div className="flex-1 flex flex-col justify-between border-l-2 border-[#20292f] bg-[repeating-linear-gradient(45deg,#383f45_0,#383f45_2px,#3f474d_2px,#3f474d_4px)]">
            <div>
              <div className="h-[36px] flex items-center justify-center bg-[#4a545c] text-[#c3cfd4]"><ChevronUp size={22} strokeWidth={1.6} /></div>
              <div className="h-[66px] mt-[2px] bg-[#4a545c]" />
            </div>
            <div className="h-[28px] flex items-center justify-center bg-[#5a646c] text-[#2a3238]"><ChevronDown size={22} strokeWidth={1.6} /></div>
          </div>
        </div>
        <div className="absolute right-[2px] top-[4px] w-[38px] h-[38px] flex items-center justify-center bg-[#4a545c]"><span className="w-[4px] h-[7px] bg-[#1a2127]" /></div>
      </div>
    </div>
  );
}
